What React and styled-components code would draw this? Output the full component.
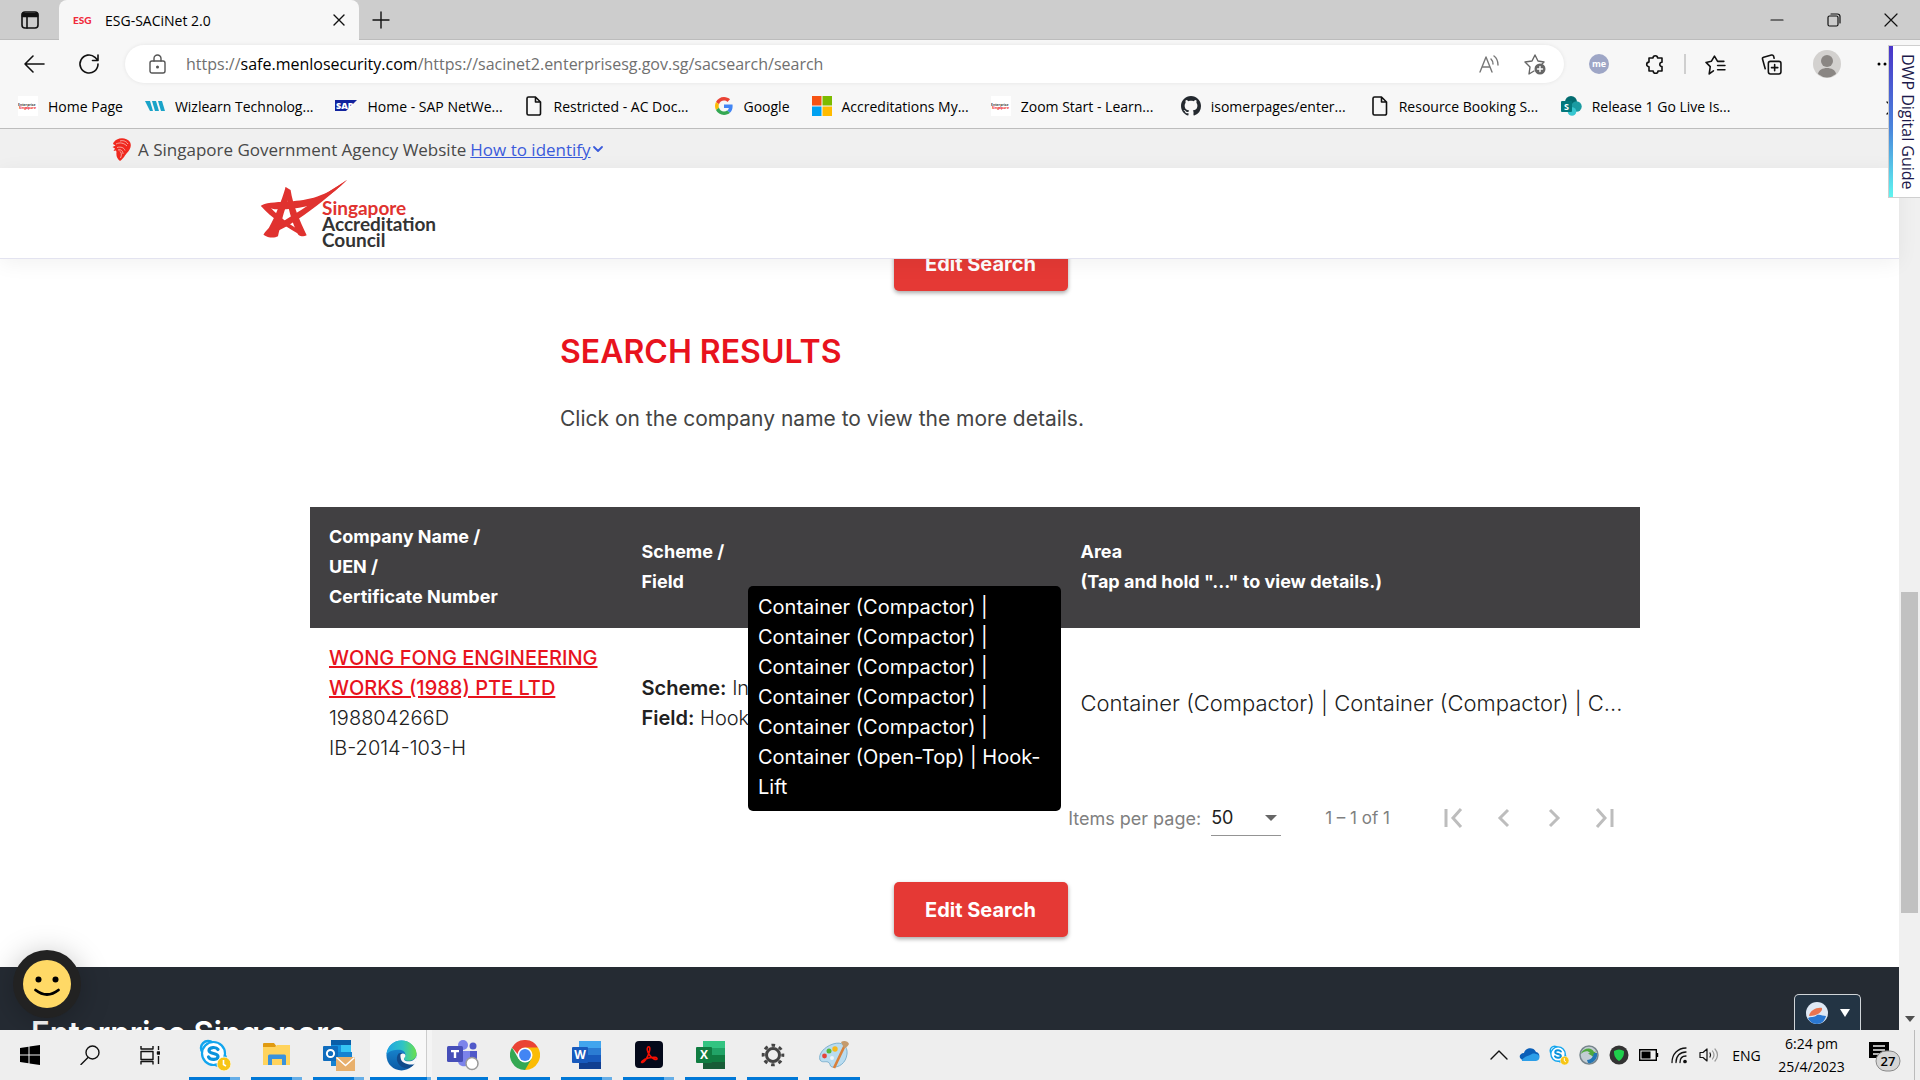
import React from "react";
import styled, { createGlobalStyle, css } from "styled-components";

const ui = `"Open Sans", "Noto Sans", sans-serif`;
const brand = `Inter, "Open Sans", sans-serif`;

const GlobalStyle = createGlobalStyle`
  *, *::before, *::after { box-sizing: border-box; }
  html, body, #root { height: 100%; }
  body { margin: 0; overflow: hidden; background: #fff; }
  button, input, select { font: inherit; color: inherit; }
  button { margin: 0; padding: 0; border: 0; background: none; cursor: pointer; }
  svg { display: block; flex: none; }
`;

const Screen = styled.div`
  position: relative;
  display: flex;
  flex-direction: column;
  height: 100vh;
  font-family: ${ui};
  color: #000;
`;

/* ---------- browser chrome ---------- */

const TabStrip = styled.div`
  display: flex;
  height: 40px;
  background: #cdcdcd;
  box-shadow: inset 0 -1px 0 #bcbcbc;
`;

const IconButton = styled.button`
  display: flex;
  align-items: center;
  justify-content: center;
  width: ${(p) => p.$w || 56}px;
  height: 40px;
  flex: none;
`;

const Tab = styled.div`
  display: flex;
  align-items: center;
  width: 300px;
  padding: 0 0 0 14px;
  border-radius: 8px 8px 0 0;
  background: #f7f7f7;
  font-size: 14px;
`;

const TabTitle = styled.span`
  flex: 1;
  padding-left: 12px;
`;

const Spacer = styled.div`
  flex: 1;
`;

const Toolbar = styled.div`
  display: flex;
  align-items: center;
  height: 48px;
  padding: 0 9px 0 6px;
  background: #f7f7f7;
`;

const AddressBar = styled.div`
  display: flex;
  align-items: center;
  flex: 1;
  height: 38px;
  margin: 0 7px 0 9px;
  padding: 0 6px 0 24px;
  border-radius: 19px;
  background: #fff;
  box-shadow: 0 0 4px rgba(0, 0, 0, 0.08);
  font-size: 16px;
  color: #707070;
`;

const Url = styled.span`
  flex: 1;
  padding-left: 20px;
  white-space: nowrap;

  b { font-weight: 400; color: #000; }
`;

const Divider = styled.i`
  width: 2px;
  height: 20px;
  margin: 0 1px;
  background: #cfcfcf;
`;

const Bookmarks = styled.nav`
  display: flex;
  gap: 22px;
  height: 41px;
  padding: 0 20px 4px 18px;
  border-bottom: 1px solid #bdbdbd;
  background: #f7f7f7;
  font-size: 14px;
`;

const Bookmark = styled.a`
  display: flex;
  align-items: center;
  gap: 10px;
  min-width: ${(p) => (p.$long ? "168px" : "0")};
  color: inherit;
  text-decoration: none;
  white-space: nowrap;
`;

/* ---------- web page ---------- */

const Viewport = styled.div`
  position: relative;
  display: flex;
  flex: 1;
  min-height: 0;
  overflow: hidden;
  background: #fff;
`;

const Page = styled.div`
  display: flex;
  flex-direction: column;
  flex: 1;
  min-width: 0;
`;

const GovBanner = styled.div`
  display: flex;
  align-items: center;
  height: 39px;
  flex: none;
  padding: 2px 0 0 112px;
  background: #f0f0f0;
  font-size: 17px;
  color: #484848;

  a { margin-left: 4px; color: #3b5bdb; }
  svg:first-child { margin-right: 6px; }
`;

const SiteHeader = styled.header`
  position: relative;
  z-index: 1;
  display: flex;
  height: 91px;
  flex: none;
  padding: 11px 0 0 260px;
  border-bottom: 1px solid #e3e3f0;
  background: #fff;
  box-shadow: 0 4px 20px rgba(0, 0, 0, 0.06);
`;

const LogoText = styled.div`
  padding-top: 21px;
  margin-left: -26px;
  font-family: Lato, sans-serif;
  font-size: 19px;
  font-weight: 700;
  line-height: 16px;
  color: #333;

  span { display: block; }
  span:first-child { color: #e0322f; }
`;

const Body = styled.div`
  display: flex;
  flex-direction: column;
  flex: 1;
  min-height: 0;
  overflow: hidden;
  font-family: ${brand};
`;

const Content = styled.main`
  display: flex;
  flex-direction: column;
  flex: none;
  margin-top: -23px;
  padding: 0 0 30px 62px;
`;

const EditButton = styled.button`
  align-self: center;
  width: 174px;
  height: 55px;
  border-radius: 5px;
  background: #e53935;
  box-shadow: 0 2px 4px rgba(0, 0, 0, 0.35);
  color: #fff;
  font-size: 20px;
  font-weight: 700;
`;

const Title = styled.h1`
  margin: 41px 0 32px 498px;
  font-size: 32px;
  font-weight: 600;
  line-height: 40px;
  color: #e8131d;
`;

const Hint = styled.p`
  margin: 0 0 73px 498px;
  font-size: 21px;
  line-height: 30px;
  color: #444;
`;

const Results = styled.section`
  position: relative;
  margin: 0 259px 24px 248px;
`;

const Table = styled.table`
  width: 100%;
  table-layout: fixed;
  border-collapse: collapse;
  line-height: 30px;
`;

const Th = styled.th`
  width: ${(p) => p.$w};
  padding: 15px 19px 16px;
  background: #414042;
  color: #fff;
  font-size: 18px;
  font-weight: 700;
  text-align: left;
`;

const Td = styled.td`
  padding: 15px 19px;
  font-size: ${(p) => (p.$wide ? 22 : 20)}px;
  font-weight: 300;
  color: #212121;
  white-space: ${(p) => (p.$wide ? "nowrap" : "normal")};

  b { font-weight: 600; }
`;

const CompanyLink = styled.a`
  color: #e8131d;
  font-weight: 500;
`;

const Tooltip = styled.div`
  position: absolute;
  z-index: 2;
  top: 79px;
  left: 438px;
  width: 313px;
  padding: 6px 10px 9px;
  border-radius: 5px;
  background: #000;
  color: #fff;
  font-size: 20px;
  line-height: 30px;
`;

const Paginator = styled.div`
  display: flex;
  align-items: center;
  justify-content: flex-end;
  height: 80px;
  padding-right: 11px;
  font-size: 18px;
  color: #808080;
`;

const SelectWrap = styled.div`
  display: flex;
  align-items: center;
  width: 70px;
  margin: 0 44px 0 10px;
  border-bottom: 1px solid #949494;
  color: #212121;

  select {
    flex: 1;
    min-width: 0;
    height: 34px;
    padding: 0;
    border: 0;
    background: none;
    appearance: none;
    font-weight: 400;
  }
  svg { margin-right: 4px; }
`;

const Range = styled.span`
  margin-right: 39px;
  font-size: 17px;
`;

const Footer = styled.footer`
  flex: 1 0 auto;
  padding: 46px 31px 0;
  background: #252b33;
  color: #fff;
  font-size: 31px;
  font-weight: 600;
  line-height: 40px;
`;

const Scrollbar = styled.div`
  display: flex;
  flex-direction: column;
  align-items: center;
  width: 21px;
  flex: none;
  background: #f0f0f0;
  padding-bottom: 8px;
`;

const Track = styled.i`
  flex: ${(p) => p.$part};
  width: 17px;
  background: ${(p) => (p.$thumb ? "#c1c1c1" : "transparent")};
`;

const Feedback = styled.button`
  position: absolute;
  z-index: 3;
  left: 13px;
  bottom: 12px;
  width: 68px;
  height: 68px;
  padding: 10px;
  border-radius: 50%;
  background: #222;
  box-shadow: 0 4px 30px rgba(0, 0, 0, 0.25);
`;

const SafeWidget = styled.button`
  position: absolute;
  right: 59px;
  bottom: 0;
  display: flex;
  align-items: center;
  gap: 12px;
  width: 67px;
  height: 36px;
  padding: 0 0 0 11px;
  border: 1px solid #d0d4d8;
  border-bottom: 0;
  border-radius: 5px 5px 0 0;
  background: #233444;
`;

const GuideTab = styled.button`
  position: absolute;
  z-index: 5;
  top: 45px;
  right: 0;
  display: flex;
  align-items: stretch;
  width: 32px;
  height: 153px;
  border: 1px solid #cfcfcf;
  border-right: 0;
  background: #fff;
  color: #1d1a4b;
  font-size: 16px;

  &::before {
    content: "";
    width: 4px;
    background: linear-gradient(#4a35c9, #4a86dc 55%, #5ff5f0);
  }
  span {
    flex: 1;
    writing-mode: vertical-rl;
    line-height: 24px;
    text-align: center;
    white-space: nowrap;
  }
`;

/* ---------- task bar ---------- */

const Taskbar = styled.div`
  display: flex;
  height: 50px;
  flex: none;
  background: #eee;
`;

const TaskSlot = styled.button`
  display: flex;
  align-items: center;
  justify-content: center;
  width: ${(p) => p.$w}px;
  height: 50px;
  flex: none;
`;

const Apps = styled.div`
  display: flex;
  padding-left: 4px;
`;

const AppSlot = styled(TaskSlot)`
  position: relative;
  width: 62px;
  ${(p) => p.$active && css`background: linear-gradient(90deg, #f8f8f8 56px, #ccc 56px 57px, #f4f4f4 57px);`}

  &::after {
    content: "";
    position: absolute;
    bottom: 0;
    left: ${(p) => (p.$active ? 0 : 5)}px;
    right: ${(p) => (p.$active ? 1 : 6)}px;
    height: 3px;
    background: ${(p) =>
      p.$stack
        ? `linear-gradient(90deg, #0078d7 ${p.$active ? 57 : 41}px, #66aee7 0)`
        : "#0078d7"};
  }
`;

const Clock = styled.time`
  display: flex;
  flex-direction: column;
  justify-content: center;
  width: 85px;
  font-size: 14px;
  line-height: 23px;
  text-align: center;
`;

const Lang = styled.span`
  display: flex;
  align-items: center;
  justify-content: center;
  width: 45px;
  font-size: 14px;
`;

const Notify = styled(TaskSlot)`
  width: 61px;
  margin-right: 5px;
  border-right: 1px solid #bbb;
`;

/* ---------- drawings ---------- */

const Line = ({ w = 20, h = w, vb = "0 0 20 20", sw = 1.4, c = "#111", children }) => (
  <svg width={w} height={h} viewBox={vb} fill="none" stroke={c} strokeWidth={sw} strokeLinecap="round" strokeLinejoin="round">
    {children}
  </svg>
);

const EnterpriseIcon = () => (
  <svg width="20" height="20" viewBox="0 0 20 20">
    <rect width="20" height="20" fill="#fff" />
    <text x="0" y="10" fontSize="3.400" fontWeight="700" fontFamily="Open Sans" fill="#444">Enterprise</text>
    <text x="1" y="13" fontSize="3.400" fontWeight="700" fontFamily="Open Sans" fill="#e22">Singapore</text>
  </svg>
);
const WizIcon = () => (
  <svg width="20" height="20" viewBox="0 0 20 20" fill="#1aa3c8">
    <path d="M0 5h5l3 10H5z" /><path d="M7 5h4l3 10h-4z" /><path d="M13 5h4l3 10h-4z" />
  </svg>
);
const SapIcon = () => (
  <svg width="22" height="20" viewBox="0 0 22 20">
    <path d="M0 4h22L11 15H0z" fill="#12239e" />
    <text x="1" y="13" fontSize="9" fontWeight="800" fontFamily="Open Sans" fill="#fff">SAP</text>
  </svg>
);
const DocIcon = () => (
  <Line w={18} h={20} vb="0 0 18 20" sw={1.6}><path d="M3.500 1h7l5 5v11.500a1.500 1.500 0 0 1-1.500 1.500H3.500A1.500 1.500 0 0 1 2 17.500V2.500A1.500 1.500 0 0 1 3.500 1zM10.500 1v5h5" /></Line>
);
const GoogleIcon = () => (
  <svg width="18" height="18" viewBox="0 0 48 48">
    <path fill="#EA4335" d="M24 9.500c3.540 0 6.710 1.220 9.210 3.600l6.850-6.850C35.900 2.380 30.470 0 24 0 14.620 0 6.510 5.380 2.560 13.220l7.980 6.190C12.430 13.720 17.740 9.500 24 9.500z" />
    <path fill="#4285F4" d="M46.980 24.550c0-1.570-.15-3.090-.38-4.550H24v9.020h12.940c-.58 2.960-2.260 5.480-4.780 7.180l7.730 6c4.510-4.180 7.090-10.360 7.090-17.650z" />
    <path fill="#FBBC05" d="M10.530 28.590A14.500 14.500 0 0 1 9.770 24c0-1.600.27-3.140.76-4.590l-7.980-6.190A23.900 23.900 0 0 0 0 24c0 3.880.92 7.540 2.560 10.780z" />
    <path fill="#34A853" d="M24 48c6.480 0 11.930-2.130 15.890-5.810l-7.730-6c-2.150 1.450-4.920 2.300-8.160 2.300-6.260 0-11.570-4.220-13.470-9.910l-7.980 6.190C6.510 42.620 14.620 48 24 48z" />
  </svg>
);
const MsIcon = () => (
  <svg width="20" height="20" viewBox="0 0 20 20">
    <path fill="#f65314" d="M0 0h9.500v9.500H0z" /><path fill="#7cbb00" d="M10.500 0H20v9.500h-9.500z" />
    <path fill="#00a1f1" d="M0 10.500h9.500V20H0z" /><path fill="#ffbb00" d="M10.500 10.500H20V20h-9.500z" />
  </svg>
);
const GithubIcon = () => (
  <svg width="20" height="20" viewBox="0 0 16 16" fill="#24292f">
    <path d="M8 0C3.580 0 0 3.580 0 8c0 3.540 2.290 6.530 5.470 7.590.4.070.55-.17.55-.38 0-.19-.01-.82-.01-1.490-2.010.37-2.530-.49-2.690-.94-.09-.23-.48-.94-.82-1.130-.28-.15-.68-.52-.01-.53.63-.01 1.080.58 1.230.82.72 1.210 1.870.87 2.330.66.07-.52.28-.87.51-1.070-1.780-.2-3.640-.89-3.640-3.950 0-.87.31-1.590.82-2.150-.08-.2-.36-1.020.08-2.120 0 0 .67-.21 2.200.82.64-.18 1.320-.27 2-.27s1.360.09 2 .27c1.530-1.040 2.200-.82 2.200-.82.44 1.100.16 1.920.08 2.120.51.56.82 1.270.82 2.150 0 3.070-1.870 3.750-3.650 3.950.29.25.54.73.54 1.480 0 1.070-.01 1.930-.01 2.200 0 .21.15.46.55.38A8.010 8.010 0 0 0 16 8c0-4.420-3.580-8-8-8z" />
  </svg>
);
const SharepointIcon = () => (
  <svg width="21" height="20" viewBox="0 0 21 20">
    <circle cx="10" cy="6" r="6" fill="#036c70" /><circle cx="15.500" cy="10.500" r="5.200" fill="#1a9ba1" /><circle cx="11" cy="15.500" r="4.300" fill="#37c6d0" />
    <rect y="5" width="11" height="11" rx="1" fill="#03787c" />
    <text x="3" y="14" fontSize="9" fontWeight="700" fontFamily="Open Sans" fill="#fff">S</text>
  </svg>
);

const bookmarks = [
  [EnterpriseIcon, "Home Page", false],
  [WizIcon, "Wizlearn Technolog...", true],
  [SapIcon, "Home - SAP NetWe...", true],
  [DocIcon, "Restricted - AC Doc...", true],
  [GoogleIcon, "Google", false],
  [MsIcon, "Accreditations My...", false],
  [EnterpriseIcon, "Zoom Start - Learn...", true],
  [GithubIcon, "isomerpages/enter...", true],
  [DocIcon, "Resource Booking S...", true],
  [SharepointIcon, "Release 1 Go Live Is...", true],
];

const Star = () => (
  <svg width="88" height="60" viewBox="30 18 230 180" preserveAspectRatio="none" fill="#e0322f">
    <path d="M97 42l10 16c-4 30-14 56-20 84-4 20-8 36-10 48-10 6-26 5-38-5 4-8 8-12 14-20C70 130 86 86 97 42z" />
    <path d="M97 42l13 9c6 46 24 92 42 136-8 5-16 3-22-2-16-36-30-84-33-143z" />
    <path d="M258 20c-44 46-84 84-128 118-18 14-34 26-54 36l-8-14c60-40 130-96 190-140z" />
    <path d="M258 20c-46 52-74 68-106 80-34 9-60 10-84 9l-36-10c8-10 40-12 66-13 50-5 90-6 160-66z" />
    <path d="M32 98l24 4c22 28 52 54 82 72l-8 8C98 160 60 136 32 98z" />
  </svg>
);

const Lion = () => (
  <svg width="20" height="24" viewBox="0 0 20 24">
    <path d="M5 1.500C9-.5 15 0 18 4c2 4 0 8-3 11-2 2-3 5-7 8-3-2-4-5-3.500-9L4 12.500 1.500 13 3 10.500.5 9l3-1.500L1 6c.5-2 2-3.500 4-4.500z" fill="#f0281e" />
    <path d="M4 6c4-2 8-1 11 2M5 9.500c4-1 7 0 8 3M7.500 13c2 1 2.500 4 1 7M8 3c3-1 6 0 8 3M6 12c3-1 5 1 5 4" stroke="#f9c4bf" strokeWidth=".8" fill="none" />
  </svg>
);

const Skype = ({ s = 32 }) => (
  <svg width={s} height={s} viewBox="0 0 32 32">
    <circle cx="9" cy="9" r="7" fill="#fff" stroke="#12a5ee" strokeWidth="2.500" /><circle cx="20" cy="20" r="7" fill="#fff" stroke="#12a5ee" strokeWidth="2.500" />
    <circle cx="14.500" cy="14.500" r="11.500" fill="#fff" stroke="#12a5ee" strokeWidth="2.200" />
    <path d="M19 10.500c-2-3-9-2.500-9 1 0 4 9 2 9 6 0 3.500-7.500 4-9.500.5" fill="none" stroke="#0a93dc" strokeWidth="3.200" strokeLinecap="round" />
    <circle cx="25" cy="25" r="7" fill="#f7c515" stroke="#fff" strokeWidth=".8" /><path d="M24.500 21v4.500l2.500 1.500" stroke="#fff" strokeWidth="1.600" fill="none" />
  </svg>
);
const Explorer = () => (
  <svg width="28" height="26" viewBox="0 0 28 26">
    <path d="M0 2a1 1 0 0 1 1-1h10l3 4H0z" fill="#e09a10" /><path d="M0 5h12l2-2h13v20H0z" fill="#ffd35c" />
    <path d="M5 23V14q0-1.500 1.500-1.500h15Q23 12.500 23 14v9h-4v-6h-10v6z" fill="#3a92dc" />
  </svg>
);
const Outlook = () => (
  <svg width="34" height="32" viewBox="0 0 34 32">
    <path d="M9 1h20v6H9z" fill="#0a5ea8" /><path d="M9 6h10v7H9z" fill="#1490df" /><path d="M19 6h10v7H19z" fill="#35c5f5" /><path d="M9 13h21v14H9z" fill="#1682d0" />
    <rect x="1" y="7" width="15" height="15" rx="1" fill="#0f6cbd" /><circle cx="8.500" cy="14.500" r="3.600" fill="none" stroke="#fff" strokeWidth="2" />
    <path d="M14 18h19v14H14z" fill="#e8b06c" /><path d="M14.500 18.500l9 8 9-8" stroke="#fff" strokeWidth="1.500" fill="none" />
  </svg>
);
const Edge = () => (
  <svg width="31" height="31" viewBox="0 0 32 32">
    <defs>
      <linearGradient id="eg" x1="0" x2="1"><stop offset="0" stopColor="#1fa3e4" /><stop offset=".55" stopColor="#2fc4c4" /><stop offset="1" stopColor="#6ae04a" /></linearGradient>
      <linearGradient id="eb" x1="0" x2="0" y1="0" y2="1"><stop offset="0" stopColor="#1b93dc" /><stop offset="1" stopColor="#0c59a4" /></linearGradient>
    </defs>
    <circle cx="16" cy="16" r="15.500" fill="url(#eb)" />
    <path d="M.5 15C1 6 8 .5 16 .5S31.500 7 31.500 14c0 5-4 7.500-8 7.500-3 0-5-1-5-2.500 0-1 1.500-1.500 1.500-4 0-3-3-5-7-5S3 11 .5 15z" fill="url(#eg)" />
    <path d="M13 14c-4 5-1 13 6 15 4 1 8-1 10.500-4.500C24 27 17 24 16.500 19c-.2-2 .5-3 1.500-4-1-2-4-2-5-1z" fill="#114a8b" />
    <path d="M15 15c2-2 5-1 5 1s-1.500 2-1.500 3.500 2 2.500 5 2.500c4 0 7-2 8-6 .5 4-.5 7-2.500 9C24 26 17 24 15.500 20c-.5-2-.8-3.500-.5-5z" fill="#f8f8f8" />
  </svg>
);
const Teams = () => (
  <svg width="32" height="32" viewBox="0 0 32 32">
    <circle cx="16" cy="6" r="5" fill="#7b83eb" /><circle cx="26" cy="7" r="3.500" fill="#5059c9" /><path d="M20 12h10v9c0 4-6 5-10 3z" fill="#5059c9" />
    <path d="M11 12h12v10c0 7-12 7-12 0z" fill="#7b83eb" /><rect y="7" width="16" height="16" rx="1.500" fill="#464eb8" />
    <path d="M4 11h8v2.200H9.200V19H6.800v-5.800H4z" fill="#fff" /><circle cx="25" cy="24.500" r="6" fill="#fff" stroke="#999" strokeWidth="1.500" />
  </svg>
);
const Chrome = () => (
  <svg width="30" height="30" viewBox="0 0 48 48">
    <path d="M24 24 3.200 12A24 24 0 0 1 44.800 12z" fill="#ea4335" /><path d="M24 24V12h20.800A24 24 0 0 1 24 48z" fill="#fbbc05" />
    <path d="M24 24l10.400 6L24 48A24 24 0 0 1 3.200 12l10.400 18z" fill="#34a853" /><path d="M3.200 12h22L24 24H13.600z" fill="#ea4335" />
    <circle cx="24" cy="24" r="12" fill="#fff" /><circle cx="24" cy="24" r="9.500" fill="#4285f4" />
  </svg>
);
const Office = ({ letter, tones, front }) => (
  <svg width="30" height="28" viewBox="0 0 30 28">
    {tones.map((t, i) => <rect key={t} x="7" y={i * 7} width="22" height="7" fill={t} />)}
    <rect y="6" width="16" height="16" rx="1" fill={front} />
    <text x="8" y="18" textAnchor="middle" fontSize="12" fontWeight="700" fontFamily="Open Sans" fill="#fff">{letter}</text>
  </svg>
);
const Acrobat = () => (
  <svg width="28" height="28" viewBox="0 0 28 28">
    <rect width="28" height="27" rx="4" fill="#04091a" />
    <path d="M13 6c2-1 2.500 2 1 6s-4 9-6.500 9.500 0-3 6-4.500 9-.5 8.500 1-5 0-7.500-4S12 7 13 6z" fill="none" stroke="#f40f02" strokeWidth="1.600" />
  </svg>
);
const Gear = () => (
  <svg width="24" height="24" viewBox="0 0 24 24" fill="none" stroke="#444">
    <circle cx="12" cy="12" r="6.500" strokeWidth="3" /><circle cx="12" cy="12" r="9.800" strokeWidth="3" strokeDasharray="3.600 4.097" strokeDashoffset="1.800" />
  </svg>
);
const Paint = () => (
  <svg width="32" height="30" viewBox="0 0 32 30">
    <path d="M14 4c9-3 15 2 14 10-1 9-8 14-15 13-3-1-1-4-4-5s-6 1-8-2C-1 14 5 7 14 4z" fill="#b9dcf0" stroke="#7fb2d0" />
    <circle cx="5.500" cy="16" r="2.400" fill="#e5443b" /><circle cx="10" cy="11" r="2.500" fill="#57b83c" /><circle cx="16" cy="9" r="2.700" fill="#f6b81c" /><circle cx="13" cy="18" r="2" fill="#eef6fa" />
    <path d="M26 5L15 28" stroke="#d9803a" strokeWidth="2.600" /><path d="M22 2c3-2 7-1 8 2-1 2-3 4-5 4z" fill="#c49a6c" />
  </svg>
);

const apps = [
  ["Skype", <Skype />, true],
  ["File Explorer", <Explorer />, true],
  ["Outlook", <Outlook />, true],
  ["Edge", <Edge />, true, true],
  ["Teams", <Teams />],
  ["Chrome", <Chrome />],
  ["Word", <Office letter="W" front="#185abd" tones={["#41a5ee", "#2b7cd3", "#185abd", "#103f91"]} />, true],
  ["Acrobat", <Acrobat />, true],
  ["Excel", <Office letter="X" front="#107c41" tones={["#33c481", "#21a366", "#107c41", "#185c37"]} />],
  ["Settings", <Gear />],
  ["Paint", <Paint />],
];

const tray = [
  ["Show hidden icons", <Line w={18} h={18} vb="0 0 18 18"><path d="M1 13l8-8 8 8" /></Line>],
  ["OneDrive", <svg width="21" height="14" viewBox="0 0 21 14"><path d="M5 5c1-5 9-7 12-1 5 1 4 8 0 8H4C-1 11 0 5 5 5z" fill="#0a5fb8" /><path d="M3 13h14c5-1 4-7 0-7-3-1-4 0-6 1s-9 3-8 6z" fill="#2c9ee8" /></svg>],
  ["Skype", <Skype s={20} />],
  ["Network client", <svg width="20" height="20" viewBox="0 0 20 20"><circle cx="10" cy="10" r="9" fill="#c3cdd3" stroke="#77858c" strokeWidth="1.500" /><path d="M1.500 9C5 2 13 2 15 7l2-.5-3 5-5-3 2-.5C9 5 5 6 1.500 9z" fill="#4fa83d" /><path d="M18 8c1 6-4 11-9 10l-1-3c5 0 6-4 7-7z" fill="#2376b5" /></svg>],
  ["Security", <svg width="20" height="20" viewBox="0 0 20 20"><circle cx="10" cy="10" r="9.500" fill="#333" /><path d="M5 6q5-3 10 0c0 5-1 7-5 10-4-3-5-5-5-10z" fill="#1fd04c" /></svg>],
  ["Battery", <svg width="20" height="12" viewBox="0 0 20 12"><path d="M.7.7h16.600v10.600H.7zM18.500 4v4" fill="none" stroke="#000" strokeWidth="1.400" /><path d="M2.500 2.500h9v7h-9z" /></svg>],
  ["Wi-Fi", <Line w={18} h={18} vb="0 0 18 18" sw={1.300}><path d="M2 16.500C2 8 8 2 16 2M6 16.500C6 10 10 6 16 6M10 16.500c0-4 2-6.500 6-6.500" /><circle cx="15" cy="15.500" r="1.200" fill="#111" /></Line>],
  ["Volume", <Line w={20} h={18} vb="0 0 20 18" sw={1.200}><path d="M1 6.500h3L8 3v12l-4-3.500H1zM11 7q1.200 2 0 4" /><path d="M13.500 5q3 4 0 8M16 3q5 6 0 12" stroke="#999" /></Line>],
];

const Chevron = ({ d }) => (
  <Line w={24} h={24} vb="0 0 24 24" sw={3} c="#bdbdbd"><path d={d} strokeLinecap="butt" strokeLinejoin="miter" /></Line>
);

export default function App() {
  return (
    <Screen>
      <GlobalStyle />
      <TabStrip>
        <IconButton $w={59} aria-label="Tab actions">
          <Line w={18} vb="0 0 18 18" sw={1.600}><rect x="1" y="1" width="16" height="16" rx="3" /><path d="M1.500 2.500h15v3h-15z" fill="#111" /><path d="M6 5v12" /></Line>
        </IconButton>
        <Tab>
          <svg width="20" height="14" viewBox="0 0 20 14"><text x="0" y="11" fontSize="10" fontWeight="900" fontFamily="Lato" fill="#f02a3c">ESG</text></svg>
          <TabTitle>ESG-SACiNet 2.0</TabTitle>
          <IconButton $w={40} aria-label="Close tab"><Line w={12} vb="0 0 12 12"><path d="M1 1l10 10M11 1L1 11" /></Line></IconButton>
        </Tab>
        <IconButton $w={43} aria-label="New tab"><Line w={18} vb="0 0 18 18"><path d="M9 1v16M1 9h16" /></Line></IconButton>
        <Spacer />
        <IconButton $w={57} aria-label="Minimize"><Line w={14} vb="0 0 14 14" sw={1.200}><path d="M1 7h12" /></Line></IconButton>
        <IconButton $w={57} aria-label="Restore"><Line w={14} vb="0 0 14 14" sw={1.200}><rect x="1" y="3" width="10" height="10" rx="1.500" /><path d="M4 1h6.500a2.500 2.500 0 0 1 2.500 2.500V10" /></Line></IconButton>
        <IconButton $w={58} aria-label="Close"><Line w={14} vb="0 0 14 14" sw={1.200}><path d="M1 1l12 12M13 1L1 13" /></Line></IconButton>
      </TabStrip>

      <Toolbar>
        <IconButton $w={55} aria-label="Back"><Line w={22} vb="0 0 22 22" sw={1.600}><path d="M21 11H2M10 3l-8 8 8 8" /></Line></IconButton>
        <IconButton $w={55} aria-label="Reload"><Line w={22} vb="0 0 22 22" sw={1.600}><path d="M20 11a9 9 0 1 1-3-6.700L19.500 7M20 2v5.500h-5.500" /></Line></IconButton>
        <AddressBar>
          <Line w={17} h={20} vb="0 0 17 20" c="#555"><rect x="1" y="7" width="15" height="12" rx="2" /><path d="M5 7V4.500a3.500 3.500 0 0 1 7 0V7" /><circle cx="8.500" cy="13" r=".8" fill="#555" /></Line>
          <Url>https://<b>safe.menlosecurity.com</b>/https://sacinet2.enterprisesg.gov.sg/sacsearch/search</Url>
          <IconButton $w={46} aria-label="Read aloud"><Line w={20} c="#777"><path d="M1 18L7 3l6 15M3 13h8M12 5q2 2 2 5M15 2q4 3 4 9" /></Line></IconButton>
          <IconButton $w={46} aria-label="Add to favorites">
            <Line w={22} vb="0 0 22 22" c="#666"><path d="M10 18l-5 3 1-7-5-5 7-1 3-6 3 6 6 1-2 2" /><circle cx="16" cy="16" r="4.800" fill="#666" /><path d="M16 13.500v5M13.500 16h5" stroke="#fff" /></Line>
          </IconButton>
        </AddressBar>
        <IconButton aria-label="me extension">
          <svg width="20" height="20" viewBox="0 0 20 20"><circle cx="10" cy="10" r="10" fill="#9ea6c6" /><text x="10" y="13" textAnchor="middle" fontSize="9" fontWeight="700" fontFamily="Open Sans" fill="#fff">me</text></svg>
        </IconButton>
        <IconButton aria-label="Extensions"><Line w={20} sw={1.600}><path d="M5 4h3a2.300 2.300 0 0 1 4.600 0H17v4.200a2.200 2.200 0 0 0 0 4.400V17h-4a2.400 2.400 0 0 1-4.800 0H4v-4.300a2.300 2.300 0 0 1 0-4.600V4z" /></Line></IconButton>
        <Divider />
        <IconButton aria-label="Favorites"><Line w={21} sw={1.500}><path d="M8 16l-4 3 1-7-4-4 5-1 3-5 3 5h6M12 11h7M12 15h7" /></Line></IconButton>
        <IconButton aria-label="Collections"><Line w={21} sw={1.500}><rect x="7" y="7" width="12" height="12" rx="2" /><path d="M13 10v6M10 13h6M4 14L1.500 5Q1 3.500 2.500 3L10 1q1.500-.3 2 1l.5 2" /></Line></IconButton>
        <IconButton aria-label="Profile">
          <svg width="28" height="28" viewBox="0 0 28 28"><circle cx="14" cy="14" r="14" fill="#d3d1cf" /><circle cx="14" cy="11" r="6" fill="#8a8683" /><path d="M5 24c1-8 17-8 18 0q-9 7-18 0z" fill="#8a8683" /></svg>
        </IconButton>
        <IconButton aria-label="Settings and more"><svg width="16" height="4" viewBox="0 0 16 4"><circle cx="4" cy="2" r="1.500" /><circle cx="10" cy="2" r="1.500" /></svg></IconButton>
      </Toolbar>

      <Bookmarks>
        {bookmarks.map(([Icon, label, long]) => (
          <Bookmark key={label} href="#" $long={long}><Icon />{label}</Bookmark>
        ))}
        <Spacer />
        <IconButton $w={20} aria-label="More bookmarks"><Line w={8} h={16} vb="0 0 8 16"><path d="M1 2l6 6-6 6" /></Line></IconButton>
      </Bookmarks>

      <Viewport>
        <Page>
          <GovBanner>
            <Lion />
            <span>A Singapore Government Agency Website</span>
            <a href="#">How to identify</a>
            <Line w={14} h={10} vb="0 0 14 10" sw={1.800} c="#3b5bdb"><path d="M3 2l4 4 4-4" /></Line>
          </GovBanner>
          <SiteHeader>
            <Star />
            <LogoText><span>Singapore</span><span>Accreditation</span><span>Council</span></LogoText>
          </SiteHeader>
          <Body>
            <Content>
              <EditButton>Edit Search</EditButton>
              <Title>SEARCH RESULTS</Title>
              <Hint>Click on the company name to view the more details.</Hint>
              <Results>
                <Table>
                  <thead>
                    <tr>
                      <Th $w="23.5%">Company Name /<br />UEN /<br />Certificate Number</Th>
                      <Th $w="33%">Scheme /<br />Field</Th>
                      <Th>Area<br />(Tap and hold "..." to view details.)</Th>
                    </tr>
                  </thead>
                  <tbody>
                    <tr>
                      <Td><CompanyLink href="#">WONG FONG ENGINEERING WORKS (1988) PTE LTD</CompanyLink><br />198804266D<br />IB-2014-103-H</Td>
                      <Td><b>Scheme:</b> Inspection<br /><b>Field:</b> Hook-Lift</Td>
                      <Td $wide>Container (Compactor) | Container (Compactor) | C...</Td>
                    </tr>
                  </tbody>
                </Table>
                <Tooltip role="tooltip">
                  Container (Compactor) | Container (Compactor) | Container (Compactor) | Container (Compactor) | Container (Compactor) | Container (Open-Top) | Hook-Lift
                </Tooltip>
                <Paginator>
                  <label htmlFor="page-size">Items per page:</label>
                  <SelectWrap>
                    <select id="page-size" defaultValue="50"><option>50</option></select>
                    <svg width="12" height="6" viewBox="0 0 12 6"><path d="M0 0h12L6 6z" fill="#666" /></svg>
                  </SelectWrap>
                  <Range>1 – 1 of 1</Range>
                  <IconButton $w={50} aria-label="First page"><Chevron d="M4 3v18M19 3l-8 9 8 9" /></IconButton>
                  <IconButton $w={50} aria-label="Previous page"><Chevron d="M16 4l-8 8 8 8" /></IconButton>
                  <IconButton $w={50} aria-label="Next page"><Chevron d="M8 4l8 8-8 8" /></IconButton>
                  <IconButton $w={50} aria-label="Last page"><Chevron d="M20 3v18M5 3l8 9-8 9" /></IconButton>
                </Paginator>
              </Results>
              <EditButton>Edit Search</EditButton>
            </Content>
            <Footer>Enterprise Singapore</Footer>
          </Body>
        </Page>
        <Scrollbar>
          <Track $part={463} />
          <Track $part={321} $thumb />
          <Track $part={103} />
          <svg width="10" height="6" viewBox="0 0 10 6"><path d="M0 0h10L5 6z" fill="#505050" /></svg>
        </Scrollbar>
        <SafeWidget aria-label="Safe surfing">
          <svg width="22" height="22" viewBox="0 0 22 22"><circle cx="11" cy="11" r="11" fill="#dfe9f5" /><path d="M2 16c3-2 6 0 9-3 3-1 6 1 9 1-1 5-5 8-9 8s-8-3-9-6z" fill="#2a78d2" /><path d="M3 14C4 8 11 5 16 6c1 3-4 8-13 8z" fill="#e8744f" /></svg>
          <svg width="10" height="8" viewBox="0 0 10 8"><path d="M0 0h10L5 8z" fill="#fff" /></svg>
        </SafeWidget>
        <Feedback aria-label="Feedback">
          <svg width="48" height="48" viewBox="0 0 48 48"><circle cx="24" cy="24" r="24" fill="#ffd966" /><circle cx="15.500" cy="19.500" r="3" /><circle cx="32.500" cy="19.500" r="3" /><path d="M12.500 30q11.500 9 23 0" fill="none" stroke="#000" strokeWidth="2.800" strokeLinecap="round" /></svg>
        </Feedback>
      </Viewport>

      <Taskbar>
        <TaskSlot $w={60} aria-label="Start"><svg width="20" height="20" viewBox="0 0 20 20"><path d="M0 3l8.500-1.200V9.500H0zM9.500 1.600L20 0v9.500H9.500zM0 10.500h8.500v7.700L0 17zM9.500 10.500H20V20L9.500 18.400z" /></svg></TaskSlot>
        <TaskSlot $w={60} aria-label="Search"><Line w={20}><circle cx="12.500" cy="7.500" r="6.500" /><path d="M8 12.500L1 19.500" /></Line></TaskSlot>
        <TaskSlot $w={60} aria-label="Task view"><Line w={20} sw={1.400}><path d="M1 1v3h12V1M1 6.500h12v8H1zM1 19.500v-3h12v3M18.500 1v4M18.500 11v8" strokeLinecap="butt" /><path d="M17.500 7h2v2h-2z" fill="#111" /></Line></TaskSlot>
        <Apps>
          {apps.map(([name, icon, stack, active]) => (
            <AppSlot key={name} aria-label={name} $stack={stack} $active={active}>{icon}</AppSlot>
          ))}
        </Apps>
        <Spacer />
        {tray.map(([name, icon]) => (
          <TaskSlot key={name} $w={30} aria-label={name}>{icon}</TaskSlot>
        ))}
        <Lang>ENG</Lang>
        <Clock><span>6:24 pm</span><span>25/4/2023</span></Clock>
        <Notify aria-label="Notifications">
          <svg width="34" height="34" viewBox="0 0 34 34">
            <path d="M2 4h20v16h-5l-3 3v-3H2z" /><path d="M6 8h12M6 12h12M6 16h8" stroke="#eee" strokeWidth="1.400" />
            <rect x="9" y="13" width="24" height="20" rx="10" fill="#d6d6d6" stroke="#888" />
            <text x="21" y="28" textAnchor="middle" fontSize="13" fontWeight="600" fontFamily="Open Sans">27</text>
          </svg>
        </Notify>
      </Taskbar>
      <GuideTab><span>DWP Digital Guide</span></GuideTab>
    </Screen>
  );
}
